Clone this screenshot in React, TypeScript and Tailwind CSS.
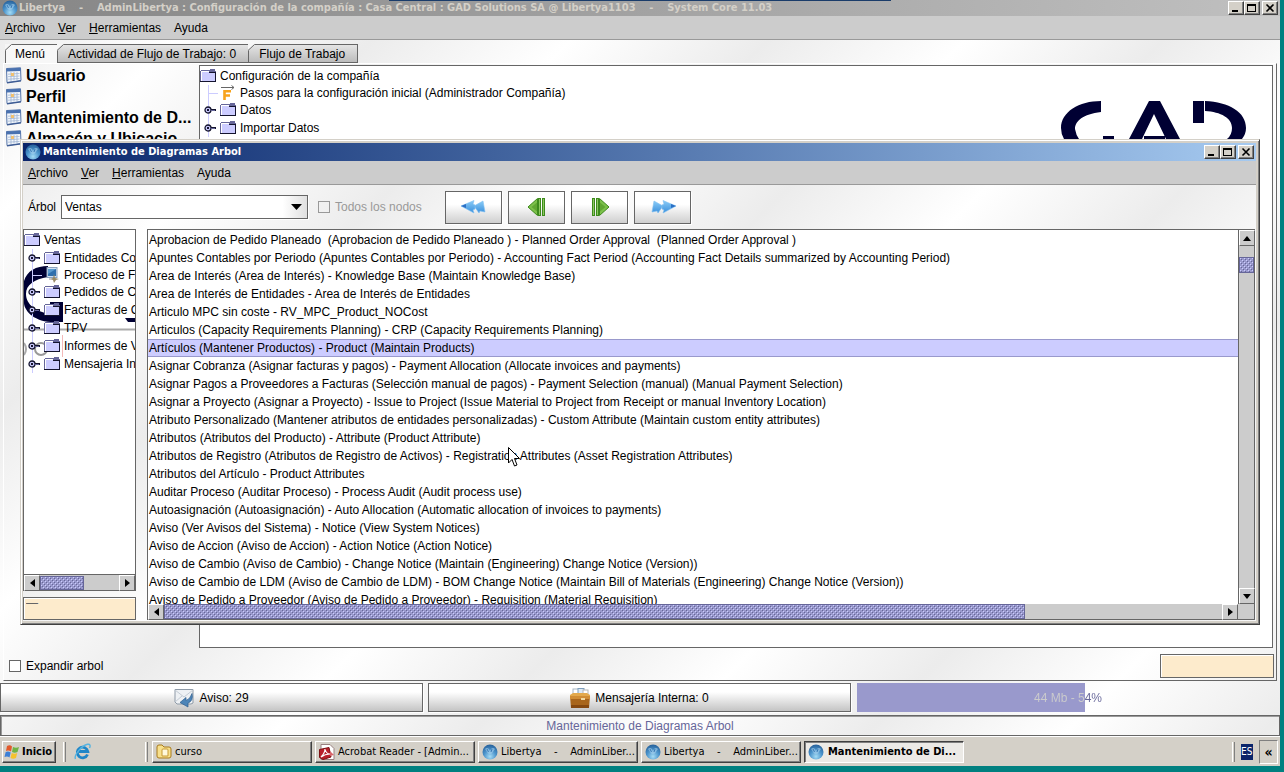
import React from "react";

const BUMPS =
  "bg-[#9999cc] bg-[image:conic-gradient(from_270deg_at_1px_1px,#ccccff_90deg,transparent_0),conic-gradient(from_270deg_at_1px_1px,#ccccff_90deg,transparent_0),conic-gradient(from_270deg_at_1px_1px,#666699_90deg,transparent_0),conic-gradient(from_270deg_at_1px_1px,#666699_90deg,transparent_0)] bg-[size:4px_4px] bg-[position:0_0,2px_2px,1px_1px,3px_3px]";

const METAL =
  "bg-[repeating-linear-gradient(135deg,#ffffff_-157px,#ececec_-17px,#ffffff_123px)]";

const TAHOMA = "font-['DejaVu_Sans_Condensed','DejaVu_Sans',sans-serif]";

const RAISED =
  "border border-t-white border-l-white border-r-[#404040] border-b-[#404040] bg-[#d4d0c8] shadow-[inset_-1px_-1px_0_#808080]";

const ENTRIES = [
  "Aprobacion de Pedido Planeado  (Aprobacion de Pedido Planeado ) - Planned Order Approval  (Planned Order Approval )",
  "Apuntes Contables por Periodo (Apuntes Contables por Periodo) - Accounting Fact Period (Accounting Fact Details summarized by Accounting Period)",
  "Area de Interés (Area de Interés) - Knowledge Base (Maintain Knowledge Base)",
  "Area de Interés de Entidades - Area de Interés de Entidades",
  "Articulo MPC sin coste - RV_MPC_Product_NOCost",
  "Articulos (Capacity Requirements Planning) - CRP (Capacity Requirements Planning)",
  "Artículos (Mantener Productos) - Product (Maintain Products)",
  "Asignar Cobranza (Asignar facturas y pagos) - Payment Allocation (Allocate invoices and payments)",
  "Asignar Pagos a Proveedores a Facturas (Selección manual de pagos) - Payment Selection (manual) (Manual Payment Selection)",
  "Asignar a Proyecto (Asignar a Proyecto) - Issue to Project (Issue Material to Project from Receipt or manual Inventory Location)",
  "Atributo Personalizado (Mantener atributos de entidades personalizadas) - Custom Attribute (Maintain custom entity attributes)",
  "Atributos (Atributos del Producto) - Attribute (Product Attribute)",
  "Atributos de Registro (Atributos de Registro de Activos) - Registration Attributes (Asset Registration Attributes)",
  "Atributos del Artículo - Product Attributes",
  "Auditar Proceso (Auditar Proceso) - Process Audit (Audit process use)",
  "Autoasignación (Autoasignación) - Auto Allocation (Automatic allocation of invoices to payments)",
  "Aviso (Ver Avisos del Sistema) - Notice (View System Notices)",
  "Aviso de Accion (Aviso de Accion) - Action Notice (Action Notice)",
  "Aviso de Cambio (Aviso de Cambio) - Change Notice (Maintain (Engineering) Change Notice (Version))",
  "Aviso de Cambio de LDM (Aviso de Cambio de LDM) - BOM Change Notice (Maintain Bill of Materials (Engineering) Change Notice (Version))",
  "Aviso de Pedido a Proveedor (Aviso de Pedido a Proveedor) - Requisition (Material Requisition)",
];
const SELECTED = 6;

function Globe() {
  return (
    <svg width="16" height="16" viewBox="0 0 16 16" className="shrink-0" aria-hidden="true">
      <defs>
        <radialGradient id="globe" cx="50%" cy="80%" r="75%">
          <stop offset="0" stopColor="#a5dcf5" />
          <stop offset="0.55" stopColor="#4a93cb" />
          <stop offset="1" stopColor="#2b669f" />
        </radialGradient>
      </defs>
      <circle cx="8" cy="8" r="7.5" fill="url(#globe)" />
      <path d="M3 5q2-2 4 0l1 2 1-2q2-2 4 0-1 1-2 3t-3 2-3-2-2-3Z" fill="#a9d2ee" opacity=".6" />
      <path d="M5 5l1.500 3M10 5l-1 3" stroke="#3b7ab5" strokeWidth="1" />
    </svg>
  );
}

function Folder() {
  return (
    <svg width="16" height="14" viewBox="0 0 16 14" className="shrink-0" shapeRendering="crispEdges" aria-hidden="true">
      <rect x="1" y="3" width="14" height="9" fill="#ccccff" />
      <path d="M1 2h8v1H1zM1 3h1v9H1z" fill="#fff" />
      <path d="M1 1h8v1H1zM0 2h1v10H0z" fill="#666699" />
      <path d="M10 0h5v2h1v1H9V1h1z" fill="#666699" />
      <path d="M9 3h7v1H9z" fill="#14142e" />
      <path d="M0 12h16v1H0zM15 3h1v10h-1z" fill="#14142e" />
    </svg>
  );
}

function Handle() {
  return (
    <svg width="12" height="8" viewBox="0 0 12 8" className="shrink-0" aria-hidden="true">
      <circle cx="4" cy="4" r="3" fill="#ccccff" stroke="#14142e" strokeWidth="1.300" />
      <rect x="3" y="3" width="2" height="2" fill="#14142e" />
      <path d="M7 3h5v2H7z" fill="#14142e" />
      <path d="M7 4h4v1H7z" fill="#666699" />
    </svg>
  );
}

function FlowIcon() {
  return (
    <svg width="16" height="16" viewBox="0 0 16 16" className="shrink-0" aria-hidden="true">
      <path d="M1 2.500h13M11.500 .5l2.500 2-2.500 2" fill="none" stroke="#666" />
      <path d="M4.500 15V6.200H11M4.500 10.500H10" fill="none" stroke="#f7a31c" strokeWidth="2.600" />
    </svg>
  );
}

function ProcessIcon() {
  return (
    <svg width="16" height="16" viewBox="0 0 16 16" className="shrink-0" aria-hidden="true">
      <rect x="3" y=".5" width="10" height="10" fill="#cfe0f3" stroke="#8aa0bd" />
      <rect x="4" y="2" width="8" height="7" fill="#2f6fae" />
      <path d="M4 2h8L4 7z" fill="#5a9bd0" />
      <rect x="5" y="11" width="5" height="2" fill="#c9c9c9" />
      <path d="M10 7l1 4 4 1-3 1-2 3-1-3-2-1 2-1z" fill="#9a8a66" />
    </svg>
  );
}

function WindowIcon() {
  return (
    <svg width="17" height="17" viewBox="0 0 17 17" className="shrink-0" aria-hidden="true">
      <path d="M1.500 1.500L15.500 .8 16 13.500 2 15.500Z" fill="#f3f7fc" stroke="#5574a8" strokeLinejoin="round" />
      <path d="M1.500 1.500L15.500 .8V4L1.500 4.500z" fill="#4a72b0" />
      <path d="M3 7.200L14.500 6.500M3 9.700L14.500 9M3 12.200L14.500 11.500M6 5V14M9 5V13.500M12 5V13" stroke="#9fb4d2" strokeWidth=".8" />
      <rect x="6" y="6" width="3" height="3" fill="#f0c070" />
      <path d="M2 15.800L16 13.900" stroke="#3c5a92" strokeWidth="1.200" />
    </svg>
  );
}

function Triangle({ dir }: { dir: "up" | "down" | "left" | "right" }) {
  const d = {
    up: "M4 0L8 5H0z",
    down: "M0 0H8L4 5z",
    left: "M5 0V8L0 4z",
    right: "M0 0L5 4L0 8z",
  }[dir];
  const flat = dir === "up" || dir === "down";
  return (
    <svg width={flat ? 8 : 5} height={flat ? 5 : 8} aria-hidden="true">
      <path d={d} fill="#000" />
    </svg>
  );
}

function ScrollButton({ dir }: { dir: "up" | "down" | "left" | "right" }) {
  return (
    <button
      type="button"
      aria-label={`Scroll ${dir}`}
      className="flex h-4 w-4 shrink-0 items-center justify-center border border-[#666666] border-t-white border-l-white bg-[#cccccc]"
    >
      <Triangle dir={dir} />
    </button>
  );
}

function CaptionButtons() {
  const base = `flex h-[14px] w-4 items-center justify-center ${RAISED}`;
  return (
    <div className="flex shrink-0 items-center">
      <button type="button" aria-label="Minimizar" className={base}>
        <svg width="12" height="10" shapeRendering="crispEdges"><rect x="2" y="7" width="6" height="2" /></svg>
      </button>
      <button type="button" aria-label="Maximizar" className={base}>
        <svg width="12" height="10" shapeRendering="crispEdges">
          <path d="M1 1h9v8H1zM2 3v5h7V3z" fillRule="evenodd" />
        </svg>
      </button>
      <button type="button" aria-label="Cerrar" className={`ml-[2px] ${base}`}>
        <svg width="12" height="10"><path d="M2.500 1.500l7 7M9.500 1.500l-7 7" stroke="#000" strokeWidth="1.600" /></svg>
      </button>
    </div>
  );
}

function MenuBar() {
  const items = ["Archivo", "Ver", "Herramientas", "Ayuda"];
  return (
    <nav className="flex h-6 shrink-0 items-center gap-[13px] border-b border-[#999999] bg-[#cccccc] px-[5px]">
      {items.map((t, i) => (
        <button type="button" key={t}>
          {i < 3 ? <><span className="underline">{t[0]}</span>{t.slice(1)}</> : t}
        </button>
      ))}
    </nav>
  );
}

function TreeNode({ label, icon }: { label: string; icon?: React.ReactNode }) {
  return (
    <li className={icon ? "flex h-4 items-center" : "flex h-[18px] items-center"}>
      <span className="flex w-5 shrink-0 items-center self-stretch bg-[linear-gradient(#ccccff,#ccccff)] bg-[size:1px_100%] bg-[position:8px_0] bg-no-repeat pl-1">
        {icon ? <span className="ml-1 h-px w-[10px] bg-[#ccccff]" /> : <Handle />}
      </span>
      {icon ?? <Folder />}
      <span className="whitespace-nowrap pl-1">{label}</span>
    </li>
  );
}

function Tab({ label, active }: { label: string; active?: boolean }) {
  return (
    <button
      type="button"
      role="tab"
      aria-selected={!!active}
      className={
        active
          ? "relative h-[19px] border border-b-0 border-[#666666] bg-[#f7f7f7] pr-3 pl-[9px]"
          : "relative h-[19px] border border-l-0 border-[#666666] bg-linear-to-b from-[#e4e4e4] to-[#bcbcbc] pr-3 pl-[10px]"
      }
    >
      <svg width="7" height="7" className="absolute -top-px -left-px" aria-hidden="true">
        <path d="M0 0H7L0 7z" fill="#f6f6f6" />
        <path d="M0 6.500L6.500 .5" stroke="#666" />
      </svg>
      {label}
    </button>
  );
}

function GadLogo() {
  return (
    <svg width="186" height="39" viewBox="0 0 186 39" fill="#000033" aria-label="GAD" role="img">
      <path d="M40 1V12C22 14 14 21 14 29Q15 35 18 39H3Q0 34 0 28C0 12 18 1 40 1Z" />
      <rect x="42" y="36" width="11" height="3" />
      <path d="M88 1H99L119 39H105L93 14L81 39H68Z" />
      <rect x="83" y="36" width="21" height="3" />
      <rect x="132" y="1" width="11" height="22" />
      <path d="M144 1C168 2 185 12 185 28Q185 34 181 39H166Q171 35 171 28C171 18 160 12 144 11Z" />
    </svg>
  );
}

function TreeWatermark() {
  return (
    <svg width="111" height="116" className="absolute top-[33px] left-0" aria-hidden="true">
      <path d="M24 3V14C10 16 2 22 2 31C2 42 13 49 26 51V39H39V59H27C8 58 0 46 0 40V18C3 8 12 3 24 3Z" fill="#000033" />
      <path d="M101 55h10v4h-7z" fill="#000033" />
      <path d="M0 66.500H111" stroke="#aaaaaa" strokeWidth="2" />
      <circle cx="17" cy="86" r="6" fill="none" stroke="#999" strokeWidth="2" />
      <path d="M0 80q4 6 0 12" stroke="#aaa" strokeWidth="2" fill="none" />
      <path d="M38.500 72v22" stroke="#f3b9b9" />
    </svg>
  );
}

function NavIcon({ kind }: { kind: string }) {
  if (kind === "first" || kind === "last") {
    return (
      <svg width="26" height="14" viewBox="0 0 26 14" className={kind === "last" ? "-scale-x-100" : ""} aria-hidden="true">
        <defs>
          <linearGradient id="blueArrow" x1="0" y1="0" x2="0" y2="1">
            <stop offset="0" stopColor="#8accf7" />
            <stop offset="1" stopColor="#3a8fdc" />
          </linearGradient>
        </defs>
        <path d="M13 6L22 1L24 12L19 11L18 13Z" fill="url(#blueArrow)" stroke="#7fc0f2" strokeWidth=".6" />
        <path d="M0 6L13 .5L12 4L14 5V9L12 10L13 13Z" fill="url(#blueArrow)" stroke="#7fc0f2" strokeWidth=".6" />
        <path d="M0 6L5 4V8Z" fill="#2c6fc4" />
      </svg>
    );
  }
  return (
    <svg width="20" height="20" viewBox="0 0 20 20" className={kind === "next" ? "-scale-x-100" : ""} aria-hidden="true">
      <path d="M1 10L10.500 1.500V18.500Z" fill="#7cc04a" stroke="#3d8a1c" />
      <path d="M4.500 10L10 5.500V14.500Z" fill="#5fa632" />
      <path d="M12.500 1v18M16.500 1v18" stroke="#3d8a1c" strokeWidth="3" />
      <path d="M12.500 2v16M16.500 2v16" stroke="#8cc860" strokeWidth="1" />
    </svg>
  );
}

function Dialog() {
  const navs = [
    ["first", "Primero"],
    ["prev", "Anterior"],
    ["next", "Siguiente"],
    ["last", "Último"],
  ];
  return (
    <section
      aria-label="Mantenimiento de Diagramas Arbol"
      className="absolute top-[139px] right-6 left-5 border border-t-[#d4d0c8] border-r-[#404040] border-b-[#404040] border-l-[#d4d0c8] bg-[#d4d0c8] pt-[3px] pr-[3px] pb-[3px] pl-[2px] shadow-[inset_1px_1px_0_#ffffff,inset_-1px_-1px_0_#808080]"
    >
      <header className="flex h-[18px] items-center bg-linear-to-r from-[#0a246a] to-[#a6caf0] pr-[2px] pl-[2px]">
        <Globe />
        <h2 className={`flex-1 pl-[2px] text-[11px] font-bold text-white ${TAHOMA}`}>Mantenimiento de Diagramas Arbol</h2>
        <CaptionButtons />
      </header>
      <MenuBar />
      <div className={METAL}>
        <div className="flex h-11 items-center pl-[5px]">
          <label htmlFor="tree" className="w-[33px]">Árbol</label>
          <div className="relative">
            <select
              id="tree"
              className="h-6 w-[247px] appearance-none border border-[#666666] bg-white bg-linear-to-r from-white from-90% to-[#e0e0e0] px-[3px] shadow-[1px_1px_0_#ffffff]"
            >
              <option>Ventas</option>
            </select>
            <svg width="11" height="6" className="pointer-events-none absolute top-[9px] right-[6px]" aria-hidden="true">
              <path d="M0 0H11L5.500 6z" />
            </svg>
          </div>
          <label className="ml-[10px] flex w-[111px] items-center gap-[5px] text-[#999999]">
            <input type="checkbox" disabled className="h-3 w-3 appearance-none border border-[#999999]" />
            Todos los nodos
          </label>
          <div className="ml-4 flex gap-[6px]">
            {navs.map(([kind, label]) => (
              <button
                type="button"
                key={kind}
                aria-label={label}
                className="flex h-[33px] w-[57px] items-center justify-center border border-[#666666] bg-linear-to-b from-white from-40% to-[#cfcfcf] shadow-[1px_1px_0_#ffffff]"
              >
                <NavIcon kind={kind} />
              </button>
            ))}
          </div>
        </div>
        <div className="flex gap-[11px] pr-px pb-px">
          <div className="flex w-[113px] shrink-0 flex-col gap-[6px]">
            <div className="flex flex-1 flex-col border border-[#666666] bg-white">
              <div className="relative flex-1 overflow-hidden">
                <TreeWatermark />
                <ul className="relative pt-px">
                  <li className="flex h-[18px] items-center">
                    <Folder />
                    <span className="pl-1">Ventas</span>
                  </li>
                  <TreeNode label="Entidades Co" />
                  <TreeNode label="Proceso de F" icon={<ProcessIcon />} />
                  <TreeNode label="Pedidos de C" />
                  <TreeNode label="Facturas de C" />
                  <TreeNode label="TPV" />
                  <TreeNode label="Informes de V" />
                  <TreeNode label="Mensajeria In" />
                </ul>
              </div>
              <div className="flex h-4 items-center border-t border-[#666666] bg-[#cccccc]">
                <ScrollButton dir="left" />
                <div className={`h-[14px] w-11 border border-[#666699] ${BUMPS}`} />
                <div className="flex-1" />
                <ScrollButton dir="right" />
              </div>
            </div>
            <input
              aria-label="Buscar nodo"
              defaultValue="—"
              className="h-[23px] w-full border border-[#666666] bg-[#fdebcc] px-[2px] pb-[11px] text-[#666666] shadow-[inset_1px_1px_0_#ffffff]"
            />
          </div>
          <div className="min-w-0 flex-1 border border-[#666666] bg-white">
            <div className="flex h-[374px]">
              <ul role="listbox" aria-label="Nodos" className="min-w-0 flex-1 overflow-hidden pt-px">
                {ENTRIES.map((t, i) => (
                  <li
                    key={t}
                    role="option"
                    aria-selected={i === SELECTED}
                    className={
                      i === SELECTED
                        ? "flex h-[18px] items-center whitespace-pre border-y border-[#9999cc] bg-[#ccccff] pl-px"
                        : "flex h-[18px] items-center whitespace-pre pl-px"
                    }
                  >
                    {t}
                  </li>
                ))}
              </ul>
              <div className="flex w-4 shrink-0 flex-col border-l border-[#666666] bg-[#cccccc]">
                <ScrollButton dir="up" />
                <div className="h-[11px]" />
                <div className={`h-4 border border-[#666699] ${BUMPS}`} />
                <div className="flex-1" />
                <ScrollButton dir="down" />
              </div>
            </div>
            <div className="flex h-[15px] items-center bg-[#cccccc] pr-4">
              <ScrollButton dir="left" />
              <div className={`h-[15px] w-[79%] border border-[#666699] ${BUMPS}`} />
              <div className="flex-1" />
              <ScrollButton dir="right" />
            </div>
          </div>
        </div>
      </div>
    </section>
  );
}

function NoticeIcon() {
  return (
    <svg width="20" height="20" viewBox="0 0 20 20" aria-hidden="true">
      <path d="M1 1.500H19V15L17 16H3L1 14Z" fill="#eef1f4" stroke="#8d99a6" />
      <path d="M1 14L8 8M19 2L10 9 1 2" fill="none" stroke="#c3cbd4" />
      <path d="M18 5.500Q19.500 13 14 15V19L6 14.500 12 9.500V12.500Q16 11.500 18 5.500Z" fill="#4c84b8" stroke="#2b5c8c" strokeWidth=".7" />
    </svg>
  );
}

function MailBoxIcon() {
  return (
    <svg width="20" height="20" viewBox="0 0 20 20" aria-hidden="true">
      <rect x="3" y="1" width="6" height="8" fill="#fff" stroke="#a9b7c4" />
      <rect x="8" y="0.500" width="6" height="8" fill="#dce9f5" stroke="#7d9dbb" />
      <rect x="13" y="2" width="5" height="7" fill="#fff" stroke="#b5b5b5" />
      <path d="M0 7l3-2h14l3 2v3H0z" fill="#e3a94c" />
      <path d="M0 8H20L19 20H1Z" fill="#a8651b" />
      <path d="M0 8H20V11H0Z" fill="#d08d35" />
      <path d="M1 17H19V20H1Z" fill="#85480f" />
      <rect x="11" y="10" width="4" height="2" fill="#f1d9a2" />
    </svg>
  );
}

function StartIcon() {
  return (
    <svg width="16" height="16" viewBox="0 0 16 16" className="shrink-0" aria-hidden="true">
      <path d="M3 2q3-1.500 5 .5L7 7.500Q4.500 6 2 7z" fill="#e2592b" />
      <path d="M9 3q3 1.500 6 0l-1.500 5q-3 1.500-5.500 0z" fill="#6fb343" />
      <path d="M1.700 8q2.500-1.200 5 .5L5.500 13.500Q3.500 12 .5 13z" fill="#3c7fd6" />
      <path d="M7.700 9q3 1.500 5.500 0L12 14q-3 1.500-5.500 0z" fill="#f5c22c" />
    </svg>
  );
}

function BrowserIcon() {
  return (
    <svg width="17" height="17" viewBox="0 0 17 17" aria-hidden="true">
      <path d="M13.500 11.500A5.300 5.300 0 1 1 13.800 8.500H5" fill="none" stroke="#1f86c8" strokeWidth="2.800" />
      <path d="M1.500 16C-.5 12 8 2.500 13.500 1.300 16.500.8 16.500 3 15.500 5" fill="none" stroke="#56b3e0" strokeWidth="1.400" />
    </svg>
  );
}

function FolderYellow() {
  return (
    <svg width="16" height="15" viewBox="0 0 16 15" className="shrink-0" aria-hidden="true">
      <path d="M1 3q0-2 2-2h3l2 2h5q2 0 2 2v7q0 2-2 2H3q-2 0-2-2z" fill="#f8e08c" stroke="#a87b1d" />
      <path d="M6 6q0-1 1-1h4q1 0 1 1v6H6z" fill="#fff9dc" stroke="#c79a35" />
    </svg>
  );
}

function AcrobatIcon() {
  return (
    <svg width="16" height="16" viewBox="0 0 16 16" className="shrink-0" aria-hidden="true">
      <path d="M2 .5h9l4 4v11H2z" fill="#fff" stroke="#9a8080" />
      <path d="M.5 5.500L10 3.500l2 9.500-8 2.500-3.500-2z" fill="#b8202a" stroke="#7d1014" />
      <path d="M2 13q4-4 4-8 1 5 5 5-5 0-9 3z" fill="none" stroke="#fff" strokeWidth="1.200" />
      <path d="M11 7l4 4-4 1z" fill="#d9656b" />
    </svg>
  );
}

function TaskButton({ icon, label, pressed }: { icon: React.ReactNode; label: string; pressed?: boolean }) {
  return (
    <button
      type="button"
      className={
        pressed
          ? "flex h-[22px] w-40 items-center gap-1 border border-t-[#404040] border-r-white border-b-white border-l-[#404040] bg-[#eceae6] px-[3px] font-bold shadow-[inset_1px_1px_0_#808080]"
          : `flex h-[22px] w-40 items-center gap-[3px] px-[3px] ${RAISED}`
      }
    >
      {icon}
      <span className="whitespace-pre">{label}</span>
    </button>
  );
}

function Grip() {
  return <div className="h-5 w-[3px] border-r border-l border-l-white border-r-[#808080]" />;
}

function Taskbar() {
  return (
    <footer className={`flex h-[30px] shrink-0 items-center border-t border-white bg-[#d4d0c8] pl-[2px] text-[11px] ${TAHOMA}`}>
      <button type="button" className={`flex h-[22px] w-[54px] items-center gap-[2px] pl-px font-bold ${RAISED}`}>
        <StartIcon />
        Inicio
      </button>
      <div className="flex w-24 items-center gap-2 pl-[7px]">
        <Grip />
        <a href="#browser" aria-label="Internet Explorer"><BrowserIcon /></a>
        <div className="flex flex-1 justify-end pr-1"><Grip /></div>
      </div>
      <div className="flex flex-1 gap-[3px]">
        <TaskButton icon={<FolderYellow />} label="curso" />
        <TaskButton icon={<AcrobatIcon />} label="Acrobat Reader - [Admin..." />
        <TaskButton icon={<Globe />} label="Libertya    -    AdminLiber..." />
        <TaskButton icon={<Globe />} label="Libertya    -    AdminLiber..." />
        <TaskButton icon={<Globe />} label="Mantenimiento de Di..." pressed />
      </div>
      <Grip />
      <span className="mx-[6px] w-3 overflow-hidden bg-[#0a246a] text-[10px] leading-4 text-white">ES</span>
      <button type="button" aria-label="Mostrar iconos" className="mr-[2px] h-6 w-[19px] border border-t-[#808080] border-r-white border-b-white border-l-[#808080] text-[14px] leading-5 font-bold">
        «
      </button>
    </footer>
  );
}

export default function App() {
  const statusButton =
    "flex h-[29px] w-[423px] items-center justify-center gap-[5px] border border-[#666666] bg-linear-to-b from-white from-30% to-[#c4c4c4] shadow-[1px_1px_0_#ffffff]";
  return (
    <div className="relative flex min-h-screen flex-col overflow-hidden bg-[#008080] pr-1 pb-[6px] font-['Liberation_Sans',Arial,sans-serif] text-[12px] leading-4 text-black">
      <div className="absolute top-0 left-[389px] h-px w-[502px] bg-[#1a3c6a]" />
      <header className="flex h-4 shrink-0 items-center bg-linear-to-r from-[#868686] to-[#c0c0c0] pr-[2px] pl-[2px]">
        <Globe />
        <h1 className={`flex-1 whitespace-pre pl-px text-[11px] font-bold text-[#d4d0c8] ${TAHOMA}`}>
          {"Libertya    -    AdminLibertya : Configuración de la compañía : Casa Central : GAD Solutions SA @ Libertya1103    -    System Core 11.03"}
        </h1>
        <CaptionButtons />
      </header>
      <MenuBar />
      <main className={`flex flex-1 flex-col ${METAL}`}>
        <div role="tablist" className="flex pt-1 pl-[5px]">
          <Tab label="Menú" active />
          <Tab label="Actividad de Flujo de Trabajo: 0" />
          <Tab label="Flujo de Trabajo" />
        </div>
        <div className="mr-[3px] ml-[3px] flex flex-1 flex-col border-t border-r border-b border-l border-t-white border-r-[#666666] border-b-[#666666] border-l-white">
          <div className="flex flex-1 pt-px pr-[3px]">
            <ul className="w-[195px] text-[16px] font-bold">
              {["Usuario", "Perfil", "Mantenimiento de D...", "Almacén y Ubicacio..."].map((t) => (
                <li key={t} className="flex h-[21px] items-center gap-1 pl-px whitespace-nowrap">
                  <WindowIcon />
                  {t}
                </li>
              ))}
            </ul>
            <div className="relative flex-1 border border-[#666666] bg-white">
              <ul className="pt-px">
                <li className="flex h-[18px] items-center">
                  <Folder />
                  <span className="pl-1">Configuración de la compañía</span>
                </li>
                <TreeNode label="Pasos para la configuración inicial (Administrador Compañía)" icon={<FlowIcon />} />
                <TreeNode label="Datos" />
                <TreeNode label="Importar Datos" />
                <li className="flex h-[18px] items-center pl-5"><Folder /></li>
              </ul>
              <div className="absolute top-[34px] right-[25px]"><GadLogo /></div>
            </div>
          </div>
          <div className="flex h-8 items-center justify-between pt-1 pr-[2px] pl-[5px]">
            <label className="flex items-center gap-[5px]">
              <input type="checkbox" className="h-3 w-3 appearance-none border border-[#666666] bg-white" />
              Expandir arbol
            </label>
            <input aria-label="Buscar" className="h-6 w-[114px] border border-[#666666] bg-[#fdebcc] px-1 shadow-[inset_1px_1px_0_#ffffff]" />
          </div>
        </div>
        <div className="mt-[2px] mb-[3px] flex gap-[5px] pr-px">
          <button type="button" className={statusButton}>
            <NoticeIcon />
            Aviso: 29
          </button>
          <button type="button" className={statusButton}>
            <MailBoxIcon />
            Mensajería Interna: 0
          </button>
          <div
            role="progressbar"
            aria-label="Memoria"
            aria-valuenow={54}
            className="ml-px flex flex-1 items-center bg-[linear-gradient(90deg,#9999cc_54%,transparent_54%)]"
          >
            <span className="w-full bg-[linear-gradient(90deg,#cccccc_54%,#666699_54%)] bg-clip-text text-center text-transparent">
              44 Mb - 54%
            </span>
          </div>
        </div>
        <p className="h-[21px] border border-[#666666] pt-[2px] text-center text-[#666699] shadow-[inset_1px_1px_0_#999999]">
          Mantenimiento de Diagramas Arbol
        </p>
      </main>
      <Taskbar />
      <Dialog />
      <svg width="13" height="21" viewBox="0 0 13 21" className="pointer-events-none absolute top-[447px] left-[508px]" aria-hidden="true">
        <path d="M.5 .5V16L4 12.500L6.500 19L9 18L6.500 11.500H11.500Z" fill="#fff" stroke="#000" />
      </svg>
    </div>
  );
}
